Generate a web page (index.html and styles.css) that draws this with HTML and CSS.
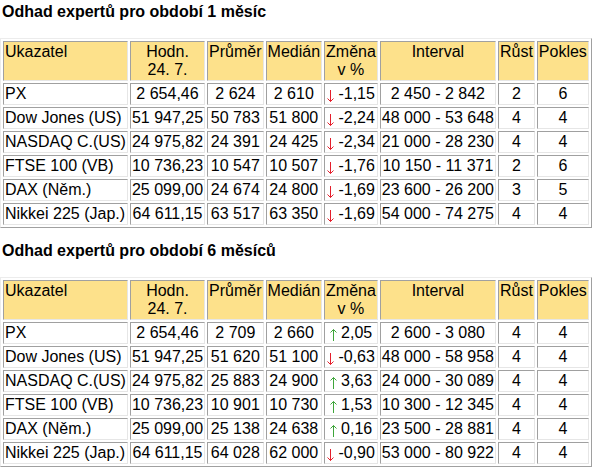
FILE: index.html
```html
<!DOCTYPE html>
<html lang="cs">
<head>
    <meta charset="UTF-8">
    <title>Odhad expertů</title>
    <link rel="stylesheet" href="styles.css">
</head>
<body>
    <p class="title">Odhad expertů pro období 1 měsíc</p>
    <table class="odhad">
        <tr class="head">
            <th class="name">Ukazatel</th>
            <th>Hodn.<br>24. 7.</th>
            <th>Průměr</th>
            <th>Medián</th>
            <th>Změna<br>v %</th>
            <th>Interval</th>
            <th>Růst</th>
            <th>Pokles</th>
        </tr>
        <tr><td class="name">PX</td><td>2 654,46</td><td>2 624</td><td>2 610</td><td><svg class="arrow down" viewBox="0 0 7 12"><path d="M3.5 0V11.5M0.5 8.5L3.5 11.5L6.5 8.5"/></svg> -1,15</td><td>2 450 - 2 842</td><td>2</td><td>6</td></tr>
        <tr><td class="name">Dow Jones (US)</td><td>51 947,25</td><td>50 783</td><td>51 800</td><td><svg class="arrow down" viewBox="0 0 7 12"><path d="M3.5 0V11.5M0.5 8.5L3.5 11.5L6.5 8.5"/></svg> -2,24</td><td>48 000 - 53 648</td><td>4</td><td>4</td></tr>
        <tr><td class="name">NASDAQ C.(US)</td><td>24 975,82</td><td>24 391</td><td>24 425</td><td><svg class="arrow down" viewBox="0 0 7 12"><path d="M3.5 0V11.5M0.5 8.5L3.5 11.5L6.5 8.5"/></svg> -2,34</td><td>21 000 - 28 230</td><td>4</td><td>4</td></tr>
        <tr><td class="name">FTSE 100 (VB)</td><td>10 736,23</td><td>10 547</td><td>10 507</td><td><svg class="arrow down" viewBox="0 0 7 12"><path d="M3.5 0V11.5M0.5 8.5L3.5 11.5L6.5 8.5"/></svg> -1,76</td><td>10 150 - 11 371</td><td>2</td><td>6</td></tr>
        <tr><td class="name">DAX (Něm.)</td><td>25 099,00</td><td>24 674</td><td>24 800</td><td><svg class="arrow down" viewBox="0 0 7 12"><path d="M3.5 0V11.5M0.5 8.5L3.5 11.5L6.5 8.5"/></svg> -1,69</td><td>23 600 - 26 200</td><td>3</td><td>5</td></tr>
        <tr><td class="name">Nikkei 225 (Jap.)</td><td>64 611,15</td><td>63 517</td><td>63 350</td><td><svg class="arrow down" viewBox="0 0 7 12"><path d="M3.5 0V11.5M0.5 8.5L3.5 11.5L6.5 8.5"/></svg> -1,69</td><td>54 000 - 74 275</td><td>4</td><td>4</td></tr>
    </table>

    <p class="title">Odhad expertů pro období 6 měsíců</p>
    <table class="odhad">
        <tr class="head">
            <th class="name">Ukazatel</th>
            <th>Hodn.<br>24. 7.</th>
            <th>Průměr</th>
            <th>Medián</th>
            <th>Změna<br>v %</th>
            <th>Interval</th>
            <th>Růst</th>
            <th>Pokles</th>
        </tr>
        <tr><td class="name">PX</td><td>2 654,46</td><td>2 709</td><td>2 660</td><td><svg class="arrow up" viewBox="0 0 7 12"><path d="M3.5 12V0.5M0.5 3.5L3.5 0.5L6.5 3.5"/></svg> 2,05</td><td>2 600 - 3 080</td><td>4</td><td>4</td></tr>
        <tr><td class="name">Dow Jones (US)</td><td>51 947,25</td><td>51 620</td><td>51 100</td><td><svg class="arrow down" viewBox="0 0 7 12"><path d="M3.5 0V11.5M0.5 8.5L3.5 11.5L6.5 8.5"/></svg> -0,63</td><td>48 000 - 58 958</td><td>4</td><td>4</td></tr>
        <tr><td class="name">NASDAQ C.(US)</td><td>24 975,82</td><td>25 883</td><td>24 900</td><td><svg class="arrow up" viewBox="0 0 7 12"><path d="M3.5 12V0.5M0.5 3.5L3.5 0.5L6.5 3.5"/></svg> 3,63</td><td>24 000 - 30 089</td><td>4</td><td>4</td></tr>
        <tr><td class="name">FTSE 100 (VB)</td><td>10 736,23</td><td>10 901</td><td>10 730</td><td><svg class="arrow up" viewBox="0 0 7 12"><path d="M3.5 12V0.5M0.5 3.5L3.5 0.5L6.5 3.5"/></svg> 1,53</td><td>10 300 - 12 345</td><td>4</td><td>4</td></tr>
        <tr><td class="name">DAX (Něm.)</td><td>25 099,00</td><td>25 138</td><td>24 638</td><td><svg class="arrow up" viewBox="0 0 7 12"><path d="M3.5 12V0.5M0.5 3.5L3.5 0.5L6.5 3.5"/></svg> 0,16</td><td>23 500 - 28 881</td><td>4</td><td>4</td></tr>
        <tr><td class="name">Nikkei 225 (Jap.)</td><td>64 611,15</td><td>64 028</td><td>62 000</td><td><svg class="arrow down" viewBox="0 0 7 12"><path d="M3.5 0V11.5M0.5 8.5L3.5 11.5L6.5 8.5"/></svg> -0,90</td><td>53 000 - 80 922</td><td>4</td><td>4</td></tr>
    </table>
</body>
</html>
```

FILE: styles.css
```css
body {
    margin: 0;
    padding-top: 3px;
    font-family: "Liberation Sans", Arial, sans-serif;
    font-size: 16px;
    line-height: 18px;
    color: #000;
    background: #fff;
}
.title {
    margin: 0 0 17px 2px;
    font-weight: bold;
}
.odhad {
    border-collapse: separate;
    border-spacing: 2px;
    border-top: 1px solid #ececec;
    border-left: 1px solid #ececec;
    border-right: 1px solid #a0a0a0;
    border-bottom: 1px solid #a0a0a0;
    margin-bottom: 14px;
    white-space: nowrap;
}
.odhad th,
.odhad td {
    padding: 1px;
    border-top: 1px solid #a0a0a0;
    border-left: 1px solid #a0a0a0;
    border-right: 1px solid #e6e6e6;
    border-bottom: 1px solid #e6e6e6;
    text-align: center;
}
.odhad th {
    background: #fde18b;
    font-weight: normal;
    vertical-align: top;
}
.odhad td {
    vertical-align: middle;
}
.odhad .name {
    text-align: left;
}
.arrow {
    width: 7px;
    height: 12px;
    vertical-align: -3px;
    fill: none;
    stroke-width: 1;
}
.arrow.down {
    stroke: #e41e2b;
}
.arrow.up {
    stroke: #3ea53a;
}
```
